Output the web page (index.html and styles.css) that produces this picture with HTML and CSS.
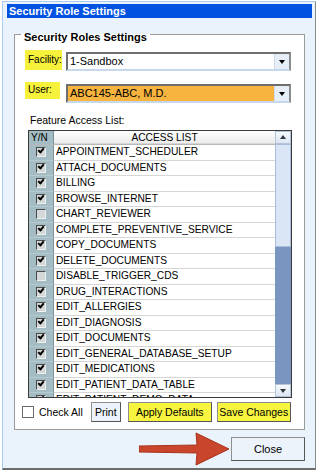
FILE: index.html
```html
<!DOCTYPE html>
<html lang="en">
<head>
    <meta charset="UTF-8">
    <meta name="viewport" content="width=device-width, initial-scale=1.0">
    <title>Security Role Settings</title>
    <link rel="stylesheet" href="styles.css">
</head>
<body>
    <div class="window">
        <div class="titlebar">Security Role Settings</div>

        <fieldset class="group">
            <legend>Security Roles Settings</legend>

            <div class="field-row">
                <span class="label">Facility:</span>
                <div class="combo">
                    <span class="combo-text">1-Sandbox</span>
                    <span class="combo-btn"></span>
                </div>
            </div>

            <div class="field-row user-row">
                <span class="label">User:</span>
                <div class="combo combo-orange">
                    <span class="combo-text">ABC145-ABC, M.D.</span>
                    <span class="combo-btn"></span>
                </div>
            </div>

            <div class="list-caption">Feature Access List:</div>

            <div class="grid">
                <div class="grid-rows">
                    <div class="grid-head">
                        <div class="yn">Y/N</div>
                        <div class="name">ACCESS LIST</div>
                    </div>
                    <div class="row"><div class="yn"><span class="cb on"></span></div><div class="name">APPOINTMENT_SCHEDULER</div></div>
                    <div class="row"><div class="yn"><span class="cb on"></span></div><div class="name">ATTACH_DOCUMENTS</div></div>
                    <div class="row"><div class="yn"><span class="cb on"></span></div><div class="name">BILLING</div></div>
                    <div class="row"><div class="yn"><span class="cb on"></span></div><div class="name">BROWSE_INTERNET</div></div>
                    <div class="row"><div class="yn"><span class="cb"></span></div><div class="name">CHART_REVIEWER</div></div>
                    <div class="row"><div class="yn"><span class="cb on"></span></div><div class="name">COMPLETE_PREVENTIVE_SERVICE</div></div>
                    <div class="row"><div class="yn"><span class="cb on"></span></div><div class="name">COPY_DOCUMENTS</div></div>
                    <div class="row"><div class="yn"><span class="cb on"></span></div><div class="name">DELETE_DOCUMENTS</div></div>
                    <div class="row"><div class="yn"><span class="cb"></span></div><div class="name">DISABLE_TRIGGER_CDS</div></div>
                    <div class="row"><div class="yn"><span class="cb on"></span></div><div class="name">DRUG_INTERACTIONS</div></div>
                    <div class="row"><div class="yn"><span class="cb on"></span></div><div class="name">EDIT_ALLERGIES</div></div>
                    <div class="row"><div class="yn"><span class="cb on"></span></div><div class="name">EDIT_DIAGNOSIS</div></div>
                    <div class="row"><div class="yn"><span class="cb on"></span></div><div class="name">EDIT_DOCUMENTS</div></div>
                    <div class="row"><div class="yn"><span class="cb on"></span></div><div class="name">EDIT_GENERAL_DATABASE_SETUP</div></div>
                    <div class="row"><div class="yn"><span class="cb on"></span></div><div class="name">EDIT_MEDICATIONS</div></div>
                    <div class="row"><div class="yn"><span class="cb on"></span></div><div class="name">EDIT_PATIENT_DATA_TABLE</div></div>
                    <div class="row"><div class="yn"><span class="cb on"></span></div><div class="name">EDIT_PATIENT_DEMO_DATA</div></div>
                </div>
                <div class="scrollbar">
                    <span class="sb-btn sb-up"></span>
                    <span class="sb-thumb"></span>
                    <span class="sb-track"></span>
                    <span class="sb-btn sb-down"></span>
                </div>
            </div>

            <div class="actions">
                <label class="check-all"><span class="box"></span>Check All</label>
                <button class="btn btn-print">Print</button>
                <button class="btn btn-yellow btn-apply">Apply Defaults</button>
                <button class="btn btn-yellow btn-save">Save Changes</button>
            </div>
        </fieldset>

        <div class="footer">
            <svg class="arrow" width="91" height="34" viewBox="0 0 91 34">
                <path d="M0 14 L58 13 L57 1 L90 17 L57 33 L58 21 L0 20 Z" fill="#c9452b" stroke="#a8341e" stroke-width="1"/>
            </svg>
            <button class="btn btn-close">Close</button>
        </div>
    </div>
</body>
</html>
```

FILE: styles.css
```css
body {
    margin: 0;
    background: #ffffff;
    font-family: "Liberation Sans", Arial, sans-serif;
    font-size: 10px;
    color: #000;
}
.window {
    box-sizing: border-box;
    width: 314px;
    height: 469px;
    margin: 1px 0 0 2px;
    padding: 2px 3px 0 4px;
    background: #eaf3fc;
    border: 1px solid #a9cbf2;
    border-right-color: #8a8a8a;
    border-bottom: 2px solid #6c6c6c;
}
.titlebar {
    height: 14px;
    line-height: 14px;
    background: #0252e2;
    color: #fff;
    font-weight: bold;
    font-size: 11px;
    padding-left: 2px;
}
.group {
    box-sizing: border-box;
    width: 291px;
    height: 406px;
    margin: 6px 0 0 7px;
    padding: 0 0 0 10px;
    border: 1px solid #9c9c9c;
    background: #fff;
}
.group legend {
    font-weight: bold;
    font-size: 11px;
    line-height: 13px;
    padding: 7px 3px 0;
    margin-left: -4px;
}
.field-row {
    display: flex;
    align-items: flex-start;
    margin-top: 6px;
}
.user-row {
    margin-top: 11px;
}
.label {
    box-sizing: border-box;
    width: 37px;
    height: 20px;
    padding: 4px 0 0 3px;
    background: #f6f23c;
    margin-right: 4px;
    font-size: 10px;
}
.user-row .label {
    width: 35px;
    height: 17px;
    padding-top: 2px;
    margin-right: 6px;
}
.combo {
    box-sizing: border-box;
    display: flex;
    width: 225px;
    height: 19px;
    margin-top: 2px;
    border: 2px solid #6e6e6e;
    border-right-color: #8a8a8a;
    border-bottom-color: #c8d8ec;
    background: #fff;
    font-size: 11px;
}
.combo-orange {
    background: #f7b43f;
}
.combo-text {
    flex: 1;
    padding: 1px 0 0 2px;
}
.combo-btn {
    width: 14px;
    background: #e6eef8;
    border-left: 1px solid #d0dcec;
    position: relative;
}
.combo-btn::after {
    content: "";
    position: absolute;
    left: 4px;
    top: 6px;
    border-left: 3px solid transparent;
    border-right: 3px solid transparent;
    border-top: 4px solid #000;
}
.list-caption {
    margin: 11px 0 0 5px;
    height: 13px;
    font-size: 10.5px;
}
.grid {
    box-sizing: border-box;
    display: flex;
    width: 264px;
    height: 268px;
    margin: 3px 0 0 3px;
    border: 1px solid #3a3a3a;
    overflow: hidden;
}
.grid-rows {
    flex: 1;
    overflow: hidden;
}
.grid-head,
.row {
    display: flex;
}
.grid-head {
    height: 13px;
    line-height: 13px;
    border-bottom: 1px solid #b8b8b8;
}
.grid-head .name {
    background: linear-gradient(#ffffff, #ececec);
    text-align: center;
    padding: 0;
}
.row {
    box-sizing: border-box;
    height: 15.5px;
    line-height: 14px;
}
.yn {
    box-sizing: border-box;
    width: 25px;
    flex-shrink: 0;
    background: #a4bcc4;
    border-right: 1px solid #7e9098;
    padding-left: 2px;
}
.row .yn {
    padding-left: 7px;
    padding-top: 2px;
    border-bottom: 1px solid #b6cacf;
}
.name {
    flex: 1;
    padding-left: 2px;
    border-bottom: 1px solid #d6d6d6;
    white-space: nowrap;
    font-size: 10.2px;
}
.cb {
    display: block;
    box-sizing: border-box;
    width: 10px;
    height: 10px;
    background: #d4d8d8;
    border: 1px solid #4a4a4a;
    border-right-color: #eef0f0;
    border-bottom-color: #eef0f0;
    position: relative;
}
.cb.on::after {
    content: "";
    position: absolute;
    left: 1px;
    top: 0px;
    width: 4px;
    height: 2px;
    border-left: 2px solid #000;
    border-bottom: 2px solid #000;
    transform: rotate(-50deg);
}
.scrollbar {
    display: flex;
    flex-direction: column;
    width: 16px;
    flex-shrink: 0;
    background: #7896c0;
}
.sb-btn {
    box-sizing: border-box;
    height: 13px;
    background: linear-gradient(#f6f9fd, #dce6f2);
    border: 1px solid #b4c4d8;
    position: relative;
}
.sb-up::after,
.sb-down::after {
    content: "";
    position: absolute;
    left: 4px;
    border-left: 3px solid transparent;
    border-right: 3px solid transparent;
}
.sb-up::after {
    top: 3px;
    border-bottom: 4px solid #303840;
}
.sb-down::after {
    top: 4px;
    border-top: 4px solid #303840;
}
.sb-thumb {
    height: 103px;
    background: #dae6f6;
    border: 1px solid #aabcd8;
    box-sizing: border-box;
}
.sb-track {
    flex: 1;
}
.actions {
    display: flex;
    align-items: center;
    margin-top: 4px;
    height: 20px;
}
.check-all {
    display: flex;
    align-items: center;
    margin-left: -3px;
    font-size: 10.5px;
}
.check-all .box {
    box-sizing: border-box;
    width: 12px;
    height: 12px;
    border: 1px solid #6a6a6a;
    background: #fff;
    margin-right: 5px;
}
.btn {
    box-sizing: border-box;
    height: 20px;
    font-family: "Liberation Sans", Arial, sans-serif;
    font-size: 10.5px;
    padding: 0;
    border: 1px solid #8e8e8e;
    border-right-color: #555;
    border-bottom-color: #555;
    background: #edf3fa;
    color: #000;
    white-space: nowrap;
}
.btn-print {
    width: 30px;
    margin-left: 8px;
}
.btn-yellow {
    background: #f7f540;
}
.btn-apply {
    width: 84px;
    margin-left: 7px;
}
.btn-save {
    width: 74px;
    margin-left: 5px;
}
.footer {
    display: flex;
    align-items: center;
    justify-content: flex-end;
    margin-top: 2px;
    padding-right: 7px;
}
.arrow {
    margin-right: 1px;
}
.btn-close {
    width: 74px;
    height: 24px;
    font-size: 11px;
}
```
